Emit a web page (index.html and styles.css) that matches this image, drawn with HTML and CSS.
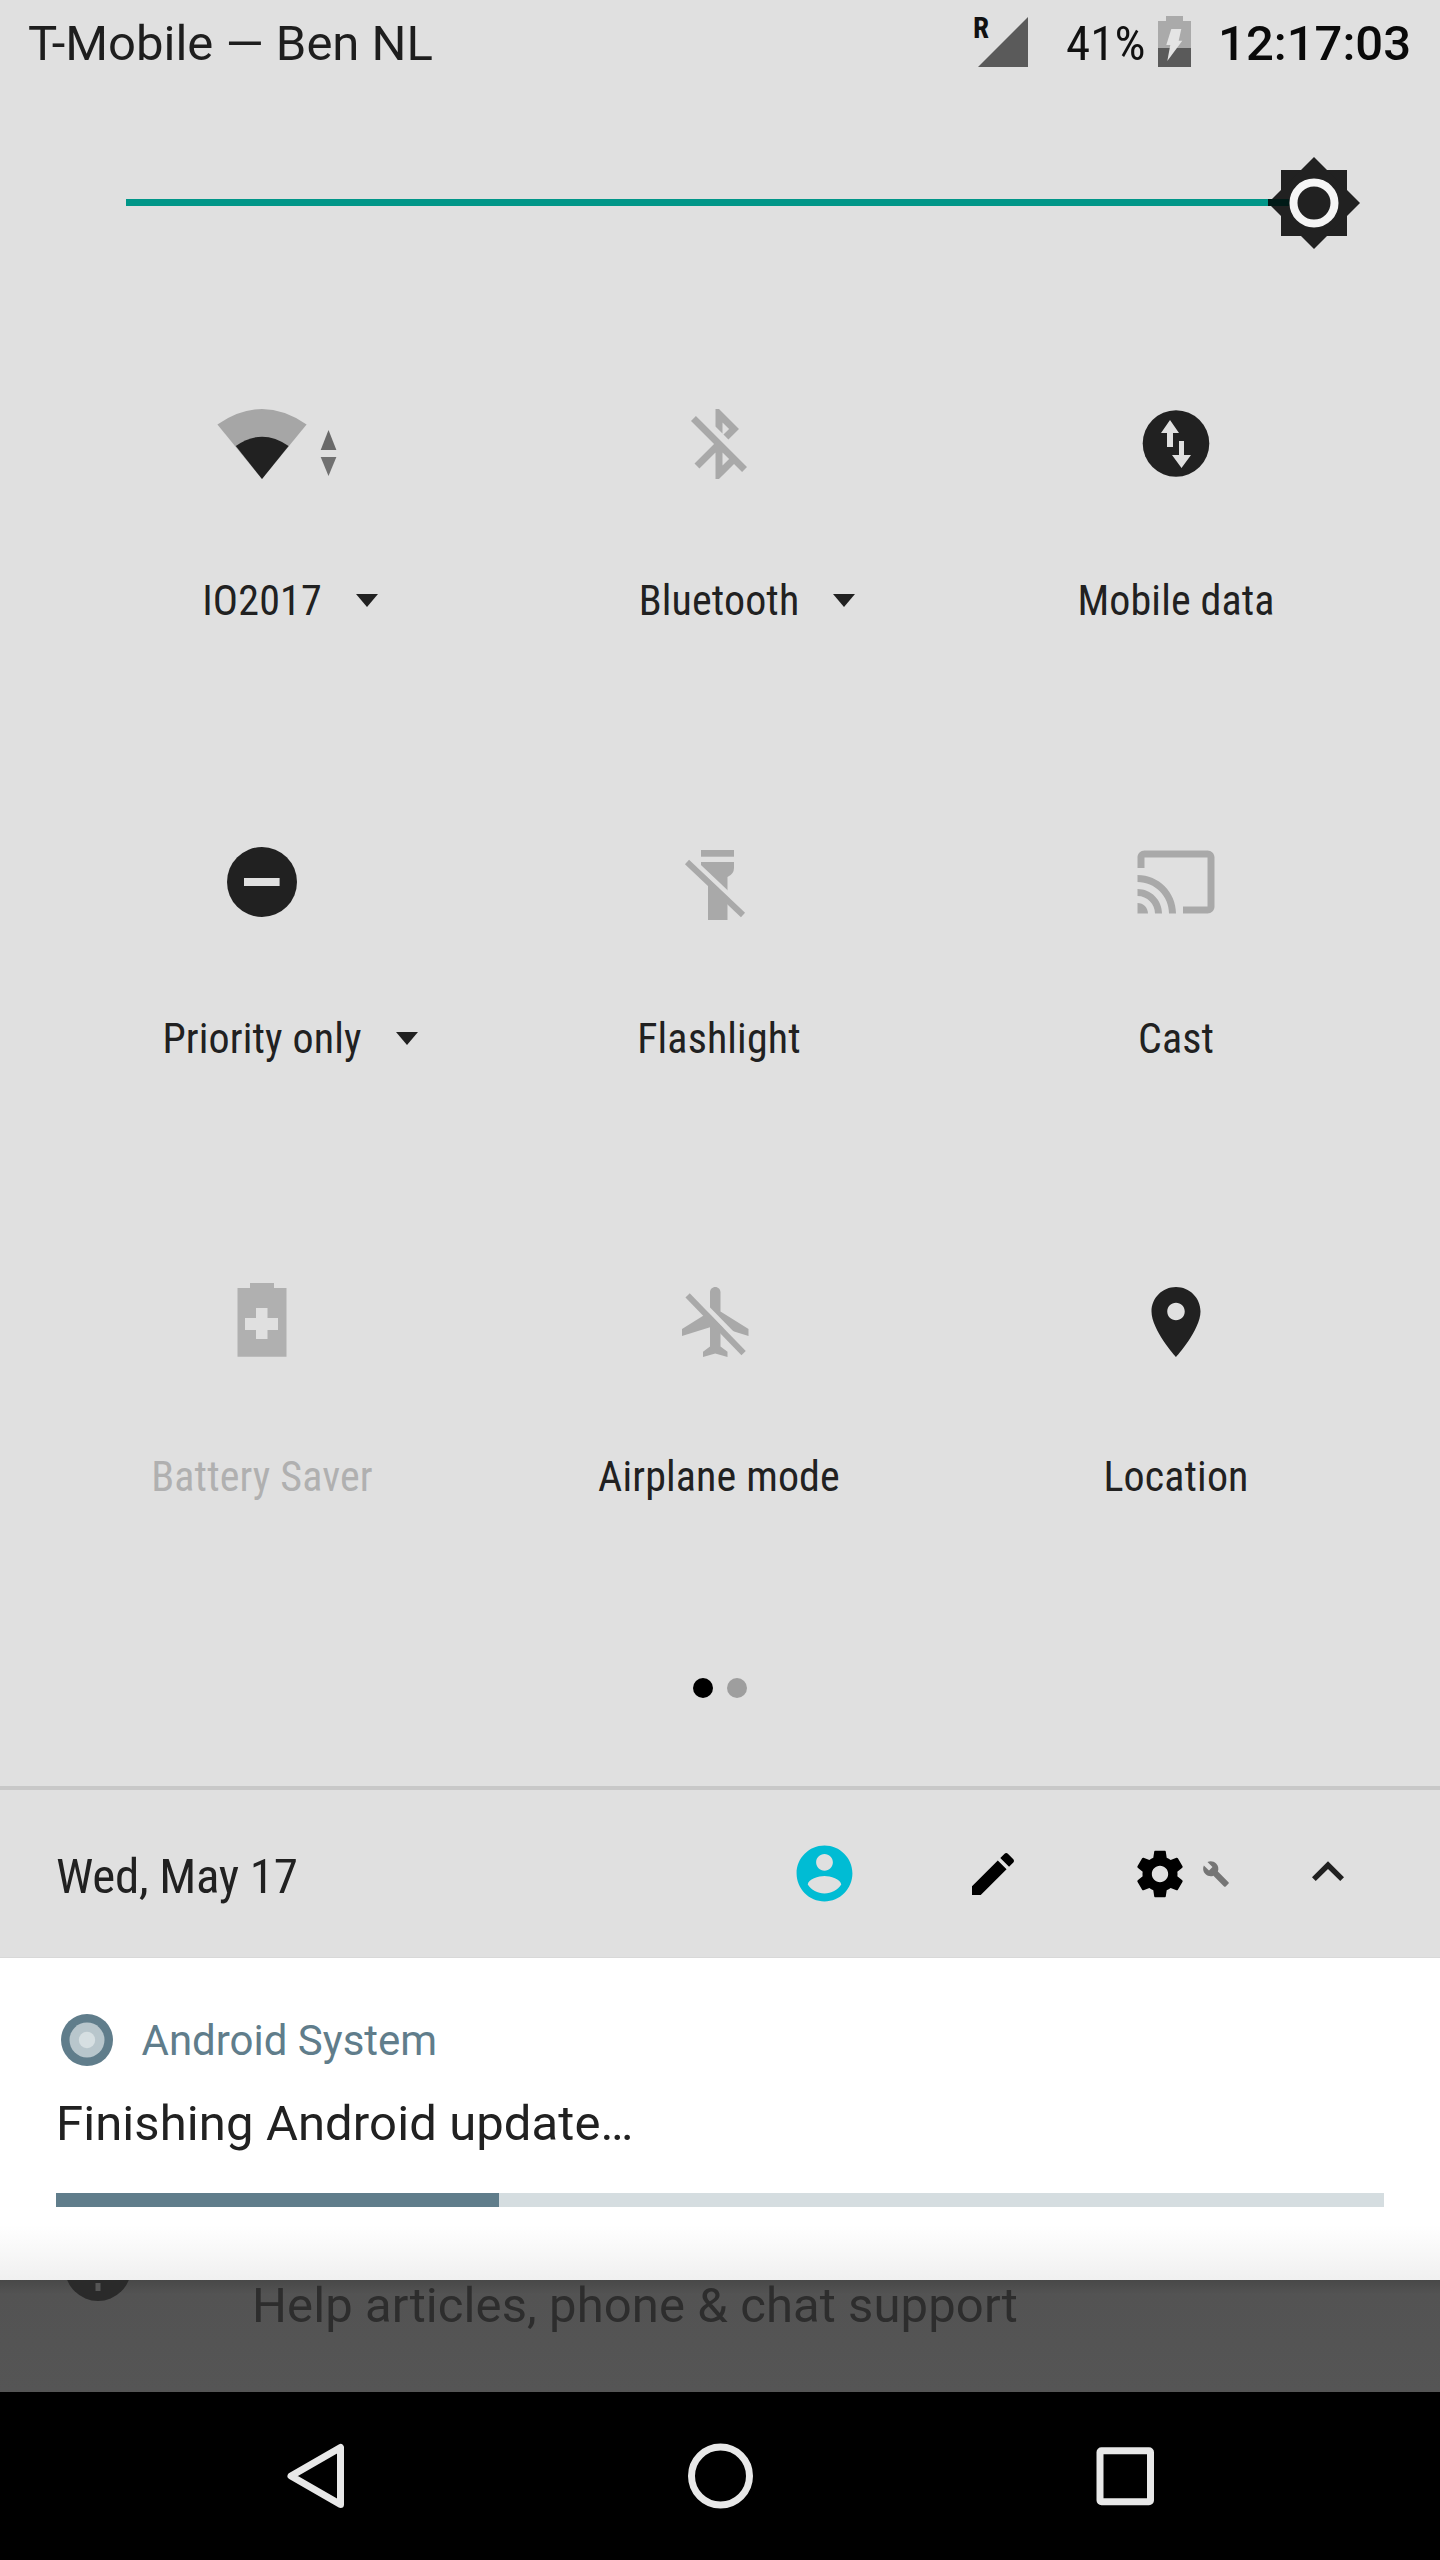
FILE: index.html
```html
<!DOCTYPE html>
<html lang="en">
<head>
<meta charset="utf-8">
<title>Quick settings</title>
<link rel="stylesheet" href="styles.css">
</head>
<body>
<main class="phone">
  <header class="status">
    <span class="carrier">T-Mobile — Ben NL</span>
    <div class="signal">
      <span class="roam">R</span>
      <svg class="signal-icon" width="50" height="50" viewBox="0 0 50 50"><polygon points="50,0 50,50 0,50" fill="#5a5a5a"/></svg>
    </div>
    <span class="pct">41%</span>
    <svg class="batt" width="33" height="51" viewBox="0 0 33 51">
      <rect x="8" y="0" width="17" height="5" fill="#aaa"/><rect x="0" y="5" width="33" height="27" fill="#aaa"/><rect x="0" y="32" width="33" height="19" fill="#5a5a5a"/>
      <polygon points="13.3,13 23.3,13 20.7,24.7 24.3,24.7 9.3,45 12.3,29 8.3,29" fill="#e4e4e4"/>
    </svg>
    <span class="clock">12:17:03</span>
  </header>

  <section class="brightness">
    <div class="track"></div>
    <svg class="sun" width="92" height="92" viewBox="0 0 92 92">
      <rect x="13" y="13" width="66" height="66" fill="#212121"/>
      <polygon points="46,0 92,46 46,92 0,46" fill="#212121"/>
      <rect x="0" y="42" width="21" height="7" fill="#001a17"/>
      <circle cx="46" cy="46" r="20.5" fill="none" stroke="#f5f5f5" stroke-width="8"/>
    </svg>
  </section>

  <section class="grid">
    <div class="tile">
      <svg class="ico over" viewBox="0 0 84 84">
        <path d="M-2.6 22.5Q42-8.5 86.6 22.5L42 77z" fill="#a6a6a6"/>
        <path d="M15.8 44Q42 25.4 68.6 44L42 77z" fill="#212121"/>
        <polygon points="108.5,28 116.4,48 100.7,48" fill="#696969"/>
        <polygon points="100.7,55 116.4,55 108.5,74" fill="#707070"/>
      </svg>
      <div class="label"><span class="cond">IO2017</span><i class="caret"></i></div>
    </div>
    <div class="tile">
      <svg class="ico" viewBox="0 0 24 24"><path fill="#a9a9a9" d="M13 5.83l1.88 1.88-1.6 1.6 1.41 1.41 3.02-3.02L12 2h-1v5.03l2 2v-3.2zM5.41 4L4 5.41 10.59 12 5 17.59 6.41 19 11 14.41V22h1l4.29-4.29 2.3 2.29L20 18.59 5.41 4zM13 18.17v-3.76l1.88 1.88L13 18.17z"/></svg>
      <div class="label"><span class="cond">Bluetooth</span><i class="caret"></i></div>
    </div>
    <div class="tile">
      <svg class="ico" viewBox="0 0 84 84">
        <circle cx="42" cy="41.5" r="33.3" fill="#212121"/>
        <path d="M36 18L45 31H39V45H33V31H27z" fill="#e0e0e0"/>
        <path d="M45 39H50V53H57L47.5 66 38 53H45z" fill="#e0e0e0"/>
      </svg>
      <div class="label"><span class="cond">Mobile data</span></div>
    </div>

    <div class="tile">
      <svg class="ico" viewBox="0 0 84 84"><circle cx="42" cy="42" r="35" fill="#212121"/><rect x="24" y="38" width="35.6" height="8" fill="#e0e0e0"/></svg>
      <div class="label"><span class="cond">Priority only</span><i class="caret"></i></div>
    </div>
    <div class="tile">
      <svg class="ico" viewBox="0 0 84 84">
        <rect x="24" y="10" width="33" height="6.7" fill="#a9a9a9"/>
        <path d="M24 22H57V28Q57 34 50.5 37V80H31V40L24 30z" fill="#a9a9a9"/>
        <path d="M13 18L69 71" stroke="#e0e0e0" stroke-width="5" fill="none"/>
        <path d="M10 22L66 75" stroke="#a9a9a9" stroke-width="6" fill="none"/>
      </svg>
      <div class="label"><span class="cond">Flashlight</span></div>
    </div>
    <div class="tile">
      <svg class="ico ico-cast" viewBox="0 0 24 24"><path fill="#a9a9a9" d="M21 3H3c-1.1 0-2 .9-2 2v3h2V5h18v14h-7v2h7c1.1 0 2-.9 2-2V5c0-1.1-.9-2-2-2zM1 18v3h3c0-1.66-1.34-3-3-3zm0-4v2c2.76 0 5 2.24 5 5h2c0-3.87-3.13-7-7-7zm0-4v2c4.97 0 9 4.03 9 9h2c0-6.08-4.93-11-11-11z"/></svg>
      <div class="label"><span class="cond">Cast</span></div>
    </div>

    <div class="tile tile-low">
      <svg class="ico" viewBox="0 0 84 84">
        <path fill-rule="evenodd" fill="#b0b0b0" d="M30 3H54V8H66.5V76.7H17.5V8H30zM36 28V38H25V50H36V59H47.5V50H58V38H47.5V28z"/>
      </svg>
      <div class="label label-off"><span class="cond">Battery Saver</span></div>
    </div>
    <div class="tile tile-low">
      <svg class="ico ico-plane" viewBox="0 0 24 24">
        <path fill="#a9a9a9" d="M21 16v-2l-8-5V3.5c0-.83-.67-1.5-1.5-1.5S10 2.67 10 3.5V9l-8 5v2l8-2.5V19l-2 1.5V22l3.5-1 3.5 1v-1.5L13 19v-5.5l8 2.5z"/>
        <path d="M4.5 3.2L20.7 19.8" stroke="#e0e0e0" stroke-width="1.4" fill="none"/>
        <path d="M3.6 4.4L19.6 20.9" stroke="#a9a9a9" stroke-width="1.7" fill="none"/>
      </svg>
      <div class="label"><span class="cond">Airplane mode</span></div>
    </div>
    <div class="tile tile-low">
      <svg class="ico" viewBox="0 0 24 24"><path fill="#212121" d="M12 2C8.13 2 5 5.13 5 9c0 5.25 7 13 7 13s7-7.75 7-13c0-3.87-3.13-7-7-7zm0 9.5c-1.38 0-2.5-1.12-2.5-2.5s1.12-2.5 2.5-2.5 2.5 1.12 2.5 2.5-1.12 2.5-2.5 2.5z"/></svg>
      <div class="label"><span class="cond">Location</span></div>
    </div>
  </section>

  <div class="dots"><i class="dot dot-on"></i><i class="dot"></i></div>
  <div class="sep"></div>

  <section class="footer">
    <span class="date cond">Wed, May 17</span>
    <svg class="f-user" width="67" height="67" viewBox="0 0 24 24"><path fill="#00bcd4" d="M12 2C6.48 2 2 6.48 2 12s4.48 10 10 10 10-4.48 10-10S17.52 2 12 2zm0 3c1.66 0 3 1.34 3 3s-1.34 3-3 3-3-1.34-3-3 1.34-3 3-3zm0 14.2c-2.5 0-4.71-1.28-6-3.22.03-1.99 4-3.08 6-3.08 1.99 0 5.97 1.09 6 3.08-1.29 1.94-3.5 3.22-6 3.22z"/></svg>
    <svg class="f-edit" width="56" height="56" viewBox="0 0 24 24"><path fill="#000" d="M3 17.25V21h3.75L17.81 9.94l-3.75-3.75L3 17.25zM20.71 7.04c.39-.39.39-1.02 0-1.41l-2.34-2.34c-.39-.39-1.02-.39-1.41 0l-1.83 1.83 3.75 3.75 1.83-1.83z"/></svg>
    <svg class="f-gear" width="56" height="56" viewBox="0 0 24 24"><path fill="#000" d="M19.43 12.98c.04-.32.07-.64.07-.98s-.03-.66-.07-.98l2.11-1.65c.19-.15.24-.42.12-.64l-2-3.46c-.12-.22-.39-.3-.61-.22l-2.49 1c-.52-.4-1.08-.73-1.69-.98l-.38-2.65C14.46 2.18 14.25 2 14 2h-4c-.25 0-.46.18-.49.42l-.38 2.65c-.61.25-1.17.59-1.69.98l-2.49-1c-.23-.09-.49 0-.61.22l-2 3.46c-.13.22-.07.49.12.64l2.11 1.65c-.04.32-.07.65-.07.98s.03.66.07.98l-2.11 1.65c-.19.15-.24.42-.12.64l2 3.46c.12.22.39.3.61.22l2.49-1c.52.4 1.08.73 1.69.98l.38 2.65c.03.24.24.42.49.42h4c.25 0 .46-.18.49-.42l.38-2.65c.61-.25 1.17-.59 1.69-.98l2.49 1c.23.09.49 0 .61-.22l2-3.46c.12-.22.07-.49-.12-.64l-2.11-1.65zM12 15.5c-1.93 0-3.5-1.57-3.5-3.5s1.57-3.5 3.5-3.5 3.5 1.57 3.5 3.5-1.57 3.5-3.5 3.5z"/></svg>
    <svg class="f-wrench" width="28" height="28" viewBox="0 0 24 24"><path fill="#757575" d="M22.7 19l-9.1-9.1c.9-2.3.4-5-1.5-6.9-2-2-5-2.4-7.4-1.3L9 6 6 9 1.6 4.7C.4 7.1.9 10.1 2.9 12.1c1.9 1.9 4.6 2.4 6.9 1.5l9.1 9.1c.4.4 1 .4 1.4 0l2.3-2.3c.5-.4.5-1.1.1-1.4z"/></svg>
    <svg class="f-chev" width="64" height="64" viewBox="0 0 24 24"><path fill="#212121" d="M12 8l-6 6 1.41 1.41L12 10.83l4.59 4.58L18 14z"/></svg>
  </section>

  <section class="notif">
    <div class="app">
      <svg width="52" height="52" viewBox="0 0 52 52"><circle cx="26" cy="26" r="26" fill="#607d8b"/><circle cx="26" cy="26" r="17.5" fill="#b8c6cc"/><circle cx="26" cy="26" r="8.2" fill="#d6dfe2"/></svg>
      <span class="app-name">Android System</span>
    </div>
    <div class="title">Finishing Android update…</div>
    <div class="bar"><div class="fill" style="width:33.36%"></div></div>
  </section>

  <section class="dim">
    <svg class="dim-ico" width="66" height="66" viewBox="0 0 66 66"><circle cx="33" cy="33" r="33" fill="#2a2a2a"/><rect x="30.5" y="48" width="5" height="8" fill="#555"/></svg>
    <span class="dim-text">Help articles, phone &amp; chat support</span>
  </section>

  <nav class="nav">
    <svg width="84" height="84" viewBox="0 0 84 84"><path d="M66.5 13.5V70.5L17 42z" fill="none" stroke="#e8e8e8" stroke-width="7" stroke-linejoin="round"/></svg>
    <svg width="84" height="84" viewBox="0 0 84 84"><circle cx="41.5" cy="42" r="29" fill="none" stroke="#e8e8e8" stroke-width="7"/></svg>
    <svg width="84" height="84" viewBox="0 0 84 84"><rect x="17" y="16.7" width="50.5" height="51" rx="1.5" fill="none" stroke="#e8e8e8" stroke-width="7"/></svg>
  </nav>
</main>
</body>
</html>
```
FILE: styles.css
```css
* { box-sizing: border-box; }
html, body { margin: 0; padding: 0; }
body { background: #000; font-family: Roboto, "Liberation Sans", sans-serif; }
.phone { width: 1440px; height: 2560px; display: flex; flex-direction: column; background: #e0e0e0; overflow: hidden; color: #212121; }

.status { height: 84px; flex: none; padding: 4px 29px 0 28px; display: flex; align-items: flex-start; font-size: 49px; line-height: 80px; }
.carrier { color: #1e1e1e; }
.signal { position: relative; margin-left: auto; width: 55px; height: 80px; }
.signal-icon { position: absolute; left: 5px; top: 13px; }
.roam { position: absolute; left: 0; top: 7px; font-size: 29px; line-height: 34px; font-weight: 700; color: #111; font-stretch: 75%; }
.pct { margin-left: 38px; width: 76px; color: #111; font-stretch: 75%; white-space: nowrap; }
.batt { margin-left: 16px; margin-top: 12px; flex: none; }
.clock { margin-left: 27px; font-weight: 500; color: #0a0a0a; }

.brightness { height: 232px; flex: none; padding: 6px 0 0 126px; display: flex; align-items: center; }
.track { width: 1163px; height: 7px; margin-bottom: 1px; background: #009688; }
.sun { margin-left: -21px; flex: none; }

.grid { height: 1314px; flex: none; padding-left: 33px; display: grid; grid-template-columns: 458px 456px 458px; grid-auto-rows: 438px; }
.tile { display: flex; flex-direction: column; align-items: center; padding-top: 86px; }
.tile-low { padding-top: 88px; }
.ico { width: 84px; height: 84px; flex: none; }
.over { overflow: visible; }
.ico-plane { margin-left: -4px; }
.ico-cast { margin-left: -1px; }
.label { position: relative; margin-top: 87px; font-size: 42px; line-height: 56px; letter-spacing: 0.14px; color: #212121; white-space: nowrap; }
.tile-low .label { margin-top: 85px; }
.label-off { color: #b0b0b0; }
.cond { font-stretch: 75%; }
.caret { position: absolute; left: 100%; top: 21px; margin-left: 34px; width: 0; height: 0; border-left: 11.5px solid transparent; border-right: 11.5px solid transparent; border-top: 13px solid #212121; }

.dots { height: 156px; flex: none; padding-top: 48px; display: flex; justify-content: center; gap: 14px; }
.dot { width: 20px; height: 20px; border-radius: 50%; background: #9e9e9e; }
.dot-on { background: #000; }
.sep { height: 4px; flex: none; background: #c8c8c8; }

.footer { height: 168px; flex: none; padding: 0 80px 0 56px; display: flex; align-items: center; border-bottom: 1px solid #d8d8d8; }
.date { font-size: 49px; line-height: 64px; letter-spacing: -0.3px; color: #212121; margin: 6px auto 0 0; }
.f-user { flex: none; }
.f-edit { margin-left: 107px; flex: none; }
.f-gear { margin-left: 111.5px; flex: none; }
.f-wrench { margin-left: 13.5px; flex: none; }
.f-chev { margin-left: 66.5px; margin-bottom: 4px; flex: none; }

.notif { height: 322px; flex: none; padding-top: 54px; background: linear-gradient(#fff 0, #fff 267px, #f0f0f0 322px); position: relative; z-index: 1; }
.app { display: flex; align-items: center; height: 56px; padding-left: 61px; }
.app-name { margin: 2px 0 0 28.5px; font-size: 42px; line-height: 56px; color: #607d8b; }
.title { margin: 24px 0 37px 56px; font-size: 49px; line-height: 64px; letter-spacing: 0.1px; color: #212121; }
.bar { margin: 0 56px; height: 14px; background: #d5dde0; }
.fill { height: 100%; background: #607d8b; }

.dim { height: 112px; flex: none; padding-left: 65px; display: flex; align-items: flex-start; background: linear-gradient(#484848 0, #535353 14px, #555 112px); }
.dim-ico { margin-top: -45px; flex: none; }
.dim-text { margin-left: 121px; font-size: 49px; line-height: 52px; letter-spacing: 0.1px; color: #2d2d2d; white-space: nowrap; }

.nav { height: 168px; flex: none; background: #000; padding: 0 273px 0 274px; display: flex; justify-content: space-between; align-items: center; }
```
